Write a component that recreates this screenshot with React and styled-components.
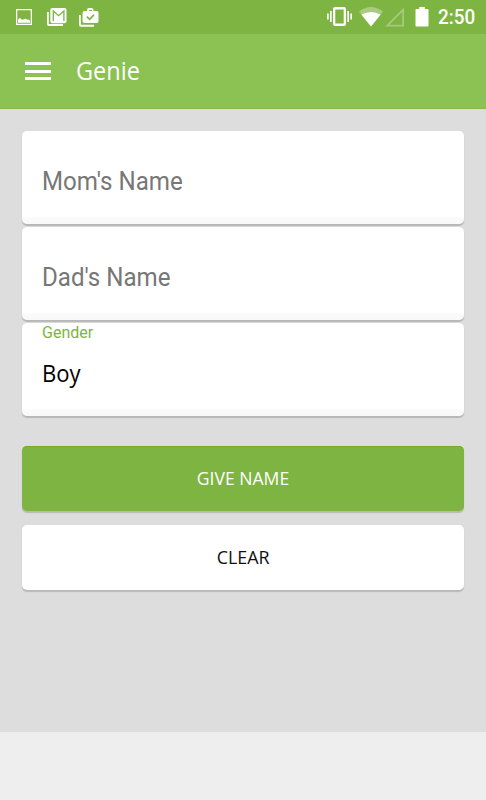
//IMPORTS
//-Modules
import React from 'react'
import styled, { createGlobalStyle } from 'styled-components'


//STYLES
//-Global
const colors = {
    primary: '#8cc154',
    primaryDark: '#7eb441',
    page: '#ddd',
    footer: '#eee',
    hint: '#777',
}
const GlobalStyle = createGlobalStyle`
    * {
        box-sizing: border-box;
    }
    body {
        margin: 0;
        background: ${colors.footer};
        font-family: Roboto, sans-serif;
    }
`
//-Components
const Screen = styled.div`
    width: 100%;
    height: 800px;
    display: flex;
    flex-direction: column;
    overflow: hidden;
`
const StatusBar = styled.div`
    height: 34px;
    flex: none;
    display: flex;
    justify-content: space-between;
    padding: 6px 10px 0 15px;
    background: ${colors.primaryDark};
    color: #fff;

    svg{
        display: block;
        fill: currentColor;
    }
`
const Notifications = styled.div`
    display: flex;
    gap: 11px;
`
const SystemIcons = styled.div`
    display: flex;
`
const Clock = styled.span`
    width: 38px;
    margin-left: 9px;
    font-size: 19.5px;
    font-weight: 500;
    line-height: 24px;
    white-space: nowrap;
    transform: scaleX(0.97);
    transform-origin: left;
`
const AppBar = styled.header`
    height: 75px;
    flex: none;
    display: flex;
    align-items: center;
    padding-left: 25px;
    background: ${colors.primary};
    border-bottom: 1px solid #83bb47;
`
const MenuButton = styled.button`
    width: 26px;
    height: 18px;
    padding: 0;
    border: 0;
    background: none;
    display: flex;
    flex-direction: column;
    justify-content: space-between;

    span{
        width: 100%;
        height: 3px;
        background: #fff;
    }
`
const Title = styled.h1`
    margin: 0 0 2px 24.5px;
    color: #fff;
    font: 400 25px/32px 'Open Sans', sans-serif;
    transform: scaleX(0.94);
    transform-origin: left;
`
const Form = styled.main`
    height: 623px;
    flex: none;
    padding: 22px 22px 0;
    background: ${colors.page};
`
const Fields = styled.div`
    display: flex;
    flex-direction: column;
    gap: 3px;
    margin-bottom: 30px;
`
const FieldCard = styled.div`
    height: 93px;
    padding-left: 20px;
    border-radius: 5px;
    background: linear-gradient(#fff 86px, #f9f9f9 87px);
    box-shadow: 0 2px 1px #b7b7b7;
`
const Label = styled.div`
    height: 30px;
    padding-top: 1px;
    color: ${colors.primaryDark};
    font-size: 16px;
    line-height: 18px;
`
const Value = styled.div`
    color: ${({ $filled }) => ($filled ? '#000' : colors.hint)};
    font-family: ${({ $filled }) => ($filled ? "'Open Sans', sans-serif" : 'Roboto, sans-serif')};
    font-size: ${({ $filled }) => ($filled ? '24px' : '25px')};
    line-height: ${({ $filled }) => ($filled ? '39px' : '41px')};
    transform: scaleX(${({ $filled }) => ($filled ? 0.92 : 0.965)});
    transform-origin: left;
`
const Buttons = styled.div`
    display: flex;
    flex-direction: column;
    gap: 14px;
`
const Button = styled.button`
    height: 65px;
    padding: 0 0 2px;
    border: 0;
    border-radius: 5px;
    background: ${({ $primary }) => ($primary ? colors.primaryDark : '#fff')};
    color: ${({ $primary }) => ($primary ? '#fff' : '#111')};
    box-shadow: 0 2px 1px #b9b9b9${({ $primary }) => ($primary ? ', inset 0 1px #73ae25' : '')};
    font: 400 19px/24px 'Open Sans', sans-serif;

    span{
        display: inline-block;
        transform: scaleX(${({ $squeeze }) => $squeeze});
    }
`
const Spaced = styled.div`
    margin-left: ${({ $left }) => $left}px;
`


//ICONS
const ImageIcon = () => (
    <svg width="18" height="22" viewBox="0 0 18 22">
        <path fillRule="evenodd" d="M1 3h16v16H1zM2.3 4.3v13.4h13.4V4.3z" />
        <path d="M3 16.7v-3.2l2-1.8 1.5 1.8h2l1.8-1 1.7 1 2 .2 1 1v2z" />
    </svg>
)
const MailIcon = () => (
    <svg width="21" height="22" viewBox="0 0 21 22">
        <path d="M1 6h1.8v12H17v2H3q-2 0-2-2z" />
        <rect x="4.3" y="2" width="16.2" height="15.2" rx="2" />
        <path d="M7.3 15V5l5.3 4.7L17.9 5v10" fill="none" stroke={colors.primaryDark} strokeWidth="1.3" />
    </svg>
)
const TaskIcon = () => (
    <svg width="21" height="22" viewBox="0 0 21 22">
        <path d="M1 9h1.8v9.7H16v2H3q-2 0-2-2z" />
        <path fillRule="evenodd" d="M6.5 5H9V4q0-2 2-2h2.5q2 0 2 2v1H19q1.5 0 1.5 2v8q0 2-1.5 2H6.5q-2 0-2-2V7q0-2 2-2zM11 5h3V3.9h-3z" />
        <path d="M8.9 10.7l2.7 2.6 4.4-4.4" fill="none" stroke={colors.primaryDark} strokeWidth="1.6" />
    </svg>
)
const VibrateIcon = () => (
    <svg width="25" height="22" viewBox="0 0 25 22">
        <path fillRule="evenodd" d="M8 1h9q2 0 2 2v15q0 2-2 2H8q-2 0-2-2V3q0-2 2-2zm.3 2.5v14h8.4v-14z" />
        <path d="M0 7.5h1.7v6H0zM3 5h1.7v11H3zM20.3 5H22v11h-1.7zM23.3 7.5H25v6h-1.7z" />
    </svg>
)
const WifiIcon = () => (
    <svg width="24" height="22" viewBox="0 0 24 22">
        <path opacity=".32" d="M0 5.5Q12-3.7 24 5.5L12 20.5z" />
        <path d="M2.3 8.5Q12 3.4 21.7 8.5L12 20.5z" />
    </svg>
)
const SignalIcon = () => (
    <svg width="19" height="22" viewBox="0 0 19 22">
        <path opacity=".3" fillRule="evenodd" d="M19 1.5v19H0zM17.2 6v12.7H4.4z" />
    </svg>
)
const BatteryIcon = () => (
    <svg width="14" height="22" viewBox="0 0 14 22">
        <path d="M4.2 1h5.6v2H13q.5 0 .5 1v15.5q0 1-.5 1H1q-.5 0-.5-1V4q0-1 .5-1h3.2z" />
    </svg>
)


//MAIN COMPONENT
const App = () => {

    return (
        <Screen>
            <GlobalStyle />

            <StatusBar>
                <Notifications>
                    <ImageIcon />
                    <Spaced $left={2}><MailIcon /></Spaced>
                    <TaskIcon />
                </Notifications>
                <SystemIcons>
                    <VibrateIcon />
                    <Spaced $left={7}><WifiIcon /></Spaced>
                    <Spaced $left={2}><SignalIcon /></Spaced>
                    <Spaced $left={11}><BatteryIcon /></Spaced>
                    <Clock>2:50</Clock>
                </SystemIcons>
            </StatusBar>

            <AppBar>
                <MenuButton aria-label="Menu">
                    <span />
                    <span />
                    <span />
                </MenuButton>
                <Title>Genie</Title>
            </AppBar>

            <Form>
                <Fields>
                    <FieldCard>
                        <Label />
                        <Value>Mom's Name</Value>
                    </FieldCard>
                    <FieldCard>
                        <Label />
                        <Value>Dad's Name</Value>
                    </FieldCard>
                    <FieldCard>
                        <Label>Gender</Label>
                        <Value $filled>Boy</Value>
                    </FieldCard>
                </Fields>

                <Buttons>
                    <Button $primary $squeeze={0.925}><span>GIVE NAME</span></Button>
                    <Button $squeeze={0.94}><span>CLEAR</span></Button>
                </Buttons>
            </Form>
        </Screen>
    )
}
export default App
